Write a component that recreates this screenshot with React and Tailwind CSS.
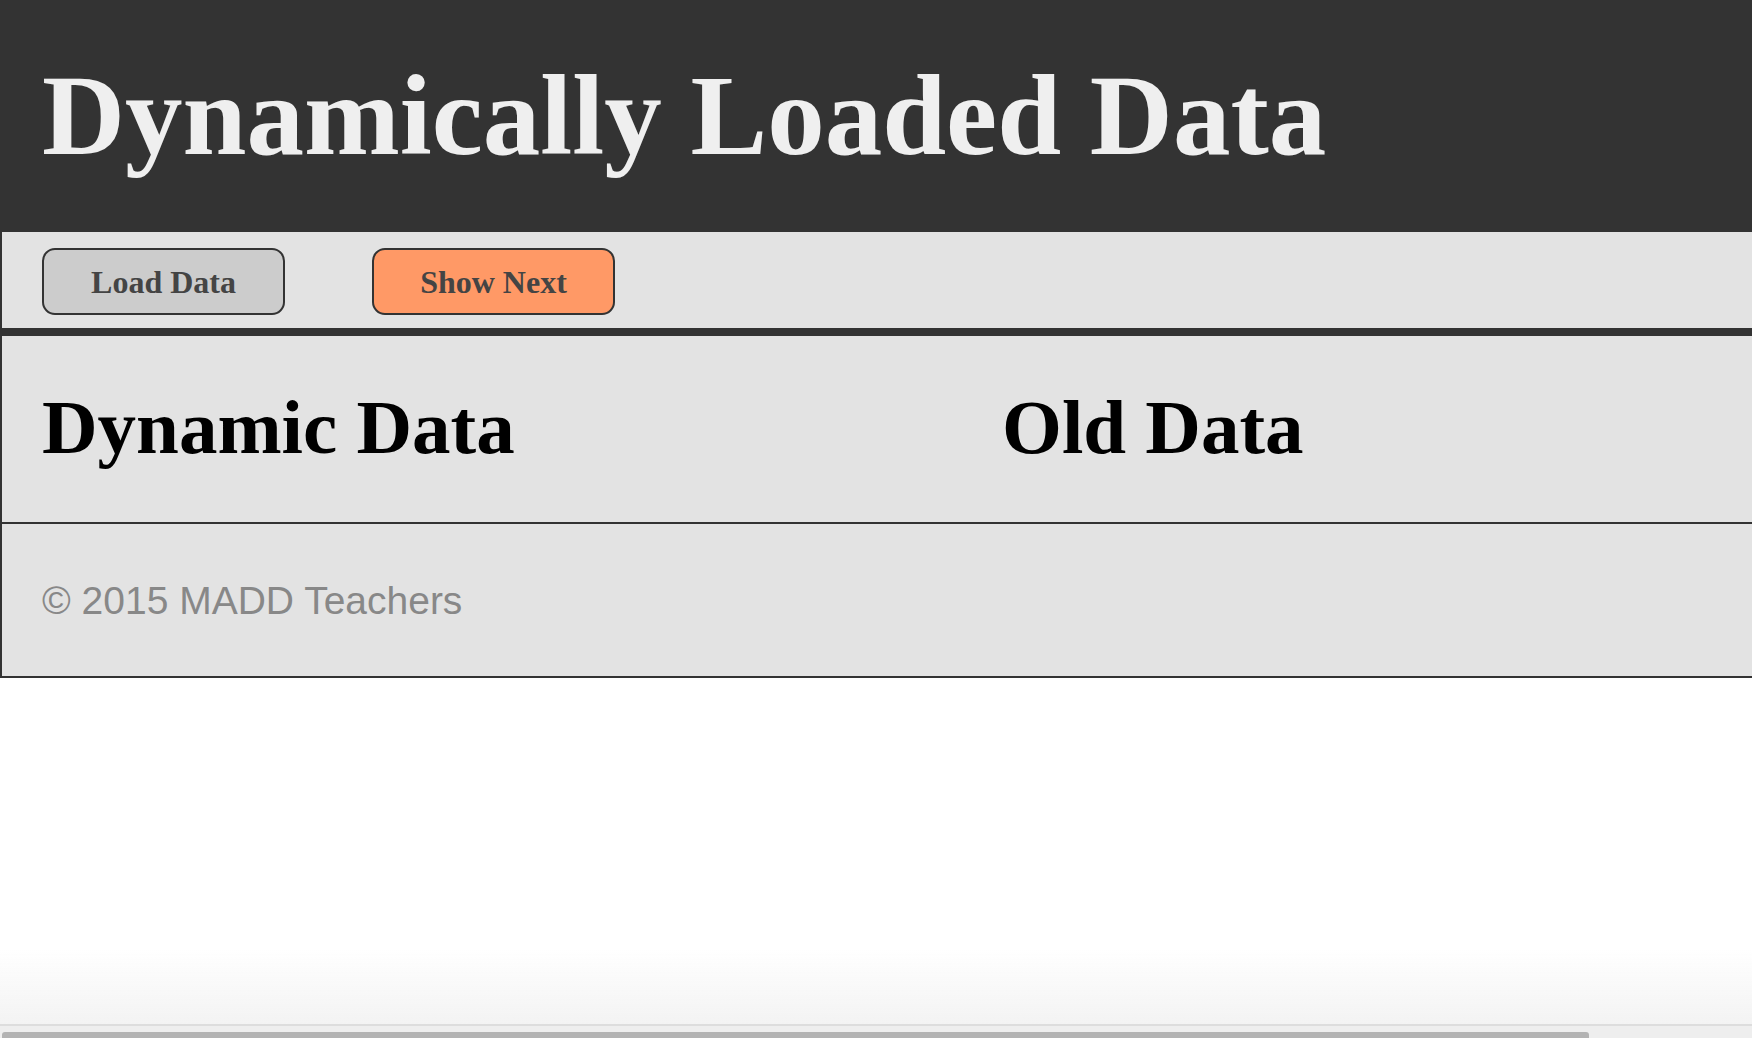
const DataButton = ({ label, tone }) => {
    // tone: "gray" | "orange"
    const bg = tone === "orange" ? "bg-[#ff9966]" : "bg-[#cccccc]";
    return (
        <button
            type="button"
            className={`${bg} w-[243px] h-[67px] border-2 border-[#333] rounded-[13px] text-[32px] leading-none font-bold text-[#444] font-['Liberation_Serif',serif]`}
        >
            {label}
        </button>
    );
};

export default function App() {
    return (
        <div className="min-h-screen bg-white font-['Liberation_Serif',serif] overflow-hidden">
            {/* Cabecera */}
            <header className="bg-[#333] pt-[58px] pb-[59px] pl-[40px] border-l-2 border-[#333]">
                <h1 className="text-[115px] leading-none font-bold text-[#efefef] whitespace-nowrap">
                    Dynamically Loaded Data
                </h1>
            </header>

            {/* Botones */}
            <nav className="bg-[#e3e3e3] h-[104px] border-l-2 border-b-8 border-[#333] flex items-start gap-[87px] pt-[16px] pl-[40px]">
                <DataButton label="Load Data" tone="gray" />
                <DataButton label="Show Next" tone="orange" />
            </nav>

            {/* Columnas de datos */}
            <section className="bg-[#e3e3e3] h-[188px] border-l-2 border-b-2 border-[#333] flex">
                <div className="w-[960px] shrink-0 pl-[40px] pt-[53px]">
                    <h2 className="text-[77px] leading-none font-bold text-black whitespace-nowrap">Dynamic Data</h2>
                </div>
                <div className="pl-[40px] pt-[53px]">
                    <h2 className="text-[77px] leading-none font-bold text-black whitespace-nowrap">Old Data</h2>
                </div>
            </section>

            {/* Pie */}
            <footer className="bg-[#e3e3e3] h-[154px] border-l-2 border-b-2 border-[#333] pt-[57px] pl-[40px]">
                <p className="font-['Liberation_Sans',Arial,sans-serif] text-[39px] leading-none text-[#888]">
                    © 2015 MADD Teachers
                </p>
            </footer>

            {/* Barra de desplazamiento del navegador */}
            <div className="fixed inset-x-0 bottom-0 h-[88px] flex flex-col pointer-events-none">
                <div className="flex-1 bg-linear-to-b from-white/0 to-[#f3f3f3]" />
                <div className="h-[2px] bg-[#dddddd]" />
                <div className="h-[12px] bg-[#eeeeee] pt-[6px]">
                    <div className="ml-[2px] w-[1587px] h-[6px] bg-[#b3b3b3] rounded-t-[3px]" />
                </div>
            </div>
        </div>
    );
}
